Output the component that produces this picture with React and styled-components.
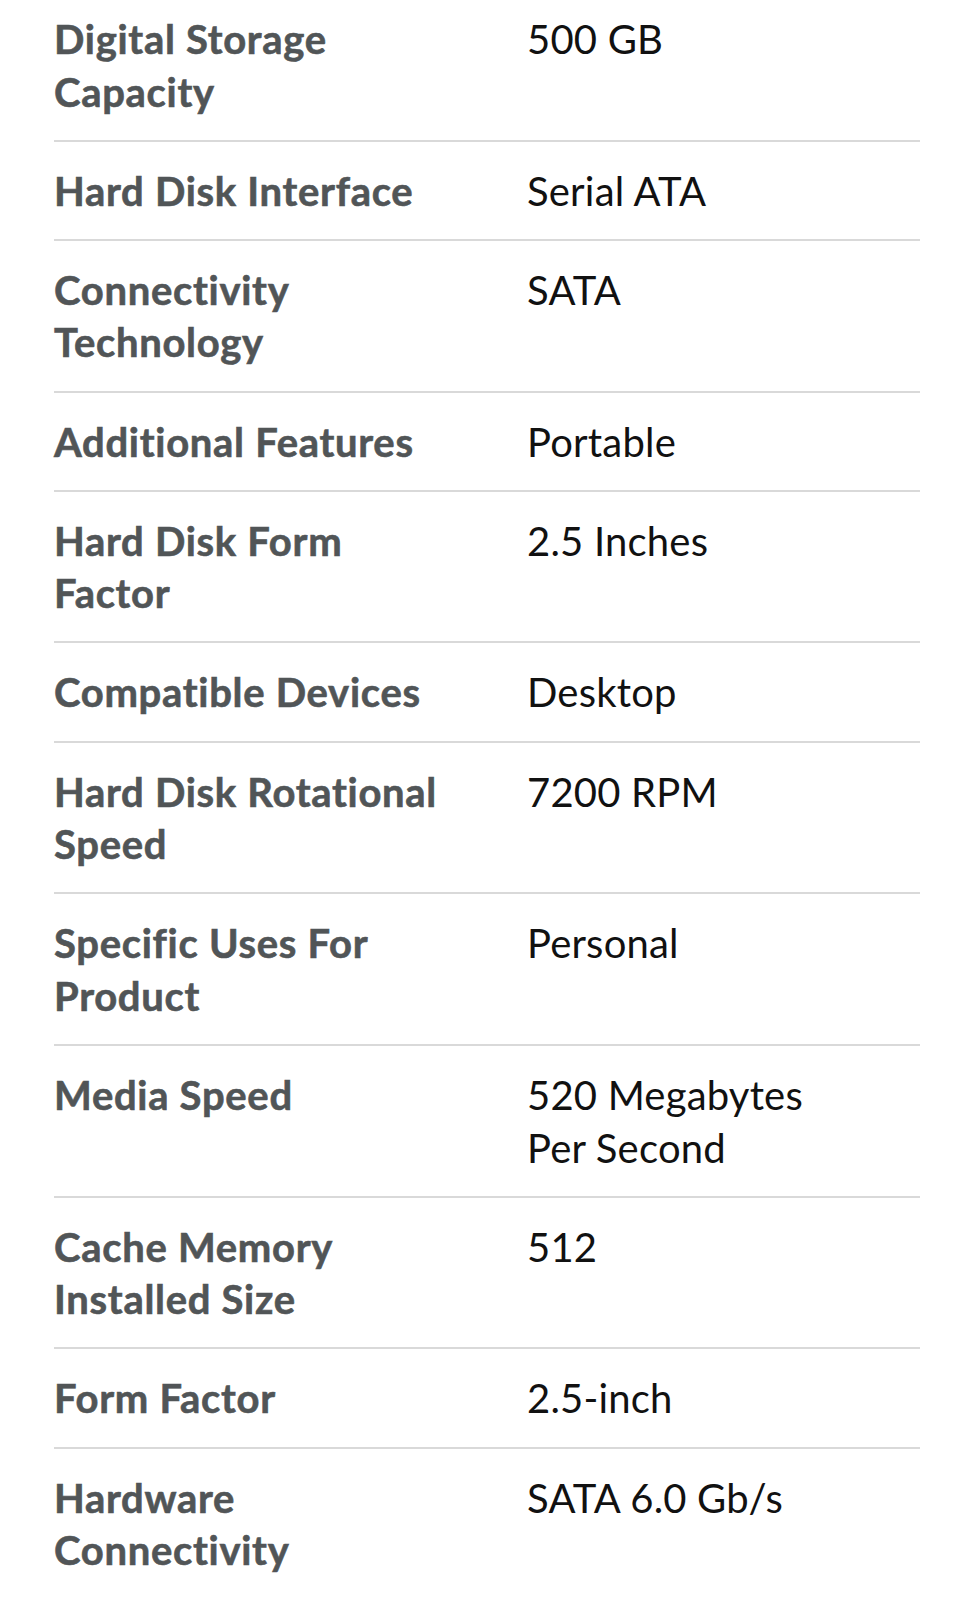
import React from 'react'
import styled, { createGlobalStyle } from 'styled-components'

const GlobalStyle = createGlobalStyle`
  html, body {
    margin: 0;
    padding: 0;
    background: #fff;
  }
  body {
    font-family: Lato, "Noto Sans", sans-serif;
    -webkit-font-smoothing: antialiased;
  }
`;

const Page = styled.div`
  width: 960px;
  height: 1598px;
  overflow: hidden;
  background: #fff;
  padding: 0 40px 0 54px;
  box-sizing: border-box;
`;

const Table = styled.div`
  display: flex;
  flex-direction: column;
`;

const Row = styled.div`
  display: grid;
  grid-template-columns: 400px 1fr;
  column-gap: 73px;
  padding: 23px 0 21.7px;
  border-bottom: 2px solid #d9d9d9;
  font-size: 40px;
  line-height: 52.5px;

  &:first-child {
    padding-top: 13px;
  }
  &:last-child {
    border-bottom: none;
  }
`;

const Label = styled.div`
  font-weight: 700;
  color: #515557;
  letter-spacing: 0.7px;
  -webkit-text-stroke: 0.6px #515557;
`;

const Value = styled.div`
  font-weight: 400;
  color: #111;
  max-width: 320px;
  letter-spacing: 0.2px;
`;

const specs = [
  ['Digital Storage Capacity', '500 GB'],
  ['Hard Disk Interface', 'Serial ATA'],
  ['Connectivity Technology', 'SATA'],
  ['Additional Features', 'Portable'],
  ['Hard Disk Form Factor', '2.5 Inches'],
  ['Compatible Devices', 'Desktop'],
  ['Hard Disk Rotational Speed', '7200 RPM'],
  ['Specific Uses For Product', 'Personal'],
  ['Media Speed', '520 Megabytes Per Second'],
  ['Cache Memory Installed Size', '512'],
  ['Form Factor', '2.5-inch'],
  ['Hardware Connectivity', 'SATA 6.0 Gb/s'],
]

export default function App() {
  return (
    <>
      <GlobalStyle />
      <Page>
        <Table>
          {specs.map(([label, value]) => (
            <Row key={label}>
              <Label>{label}</Label>
              <Value>{value}</Value>
            </Row>
          ))}
        </Table>
      </Page>
    </>
  )
}
